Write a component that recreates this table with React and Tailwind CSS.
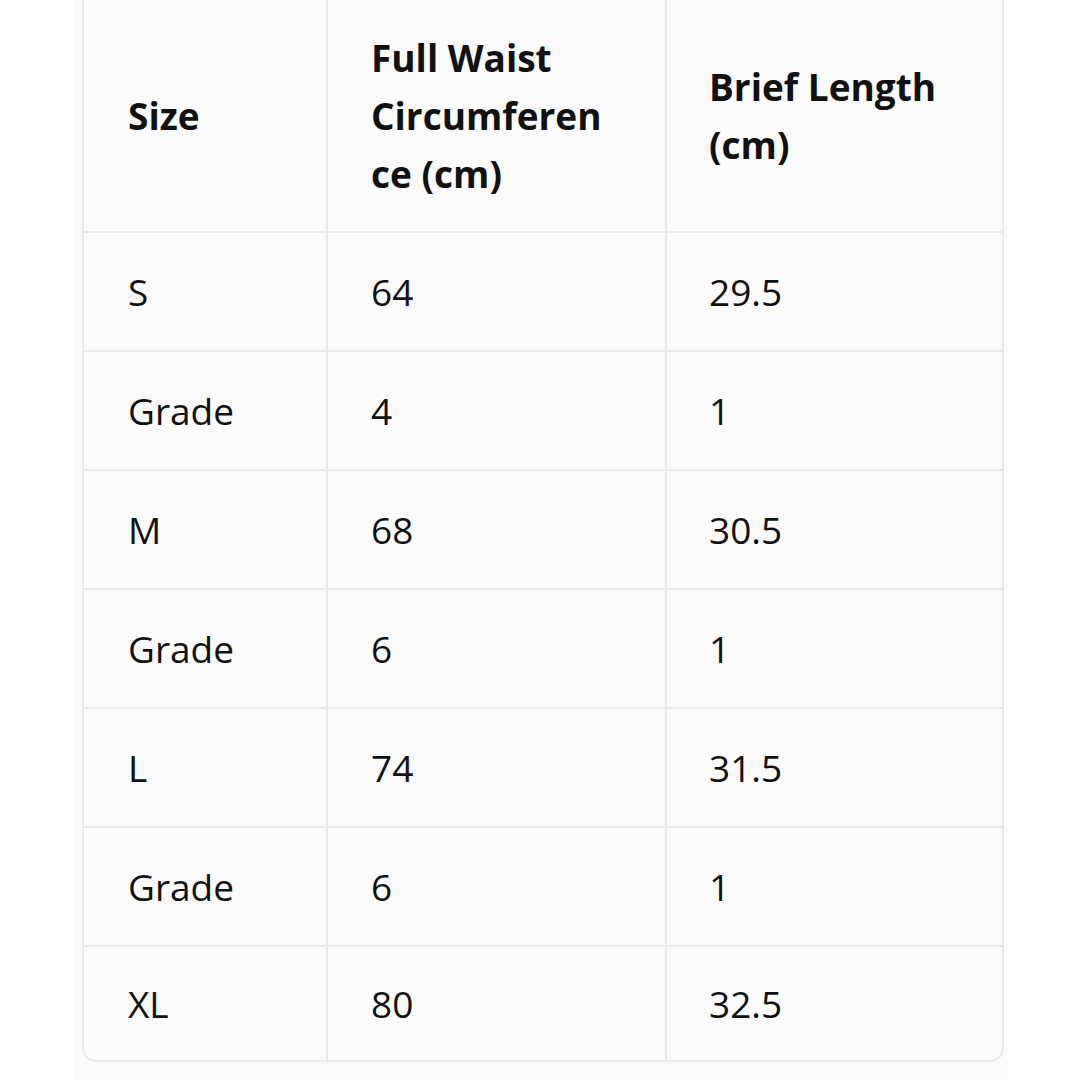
import React from 'react';

const rows = [
    ['S', '64', '29.5'],
    ['Grade', '4', '1'],
    ['M', '68', '30.5'],
    ['Grade', '6', '1'],
    ['L', '74', '31.5'],
    ['Grade', '6', '1'],
    ['XL', '80', '32.5'],
];

const cols = 'grid grid-cols-[242px_2px_337px_2px_335px]';

const App = () => {
    return (
        <div
            className="min-h-screen w-[1080px] h-[1080px] overflow-hidden bg-white text-[#111]"
            style={{ fontFamily: '"Open Sans", "Noto Sans", sans-serif' }}
        >
            <div className="ml-[74px] w-[934px] h-[1080px] bg-[#fafafa] px-[8px]">
                <div className="w-[922px] border-x-2 border-b-2 border-[#e8e8e8] rounded-b-[14px] overflow-hidden bg-[#fafafa]">
                    {/* Header */}
                    <div className={`${cols} h-[233px] border-b-2 border-[#e8e8e8]`}>
                        <div className="flex items-center pl-[44px] text-[37px] font-bold">Size</div>
                        <div className="bg-[#e8e8e8]" />
                        <div className="flex items-center pl-[43px] text-[37px] font-bold leading-[58px] whitespace-nowrap">
                            <div>
                                Full Waist<br />Circumferen<br />ce (cm)
                            </div>
                        </div>
                        <div className="bg-[#e8e8e8]" />
                        <div className="flex items-center pl-[42px] text-[37px] font-bold leading-[58px] whitespace-nowrap">
                            <div>
                                Brief Length<br />(cm)
                            </div>
                        </div>
                    </div>

                    {/* Body */}
                    {rows.map((r, i) => (
                        <div
                            key={i}
                            className={`${cols} ${i === rows.length - 1 ? 'h-[113px]' : 'h-[119px] border-b-2 border-[#e8e8e8]'}`}
                        >
                            <div className="flex items-center pl-[44px] text-[37px]">{r[0]}</div>
                            <div className="bg-[#e8e8e8]" />
                            <div className="flex items-center pl-[43px] text-[37px]">{r[1]}</div>
                            <div className="bg-[#e8e8e8]" />
                            <div className="flex items-center pl-[42px] text-[37px]">{r[2]}</div>
                        </div>
                    ))}
                </div>
            </div>
        </div>
    );
};

export default App;
